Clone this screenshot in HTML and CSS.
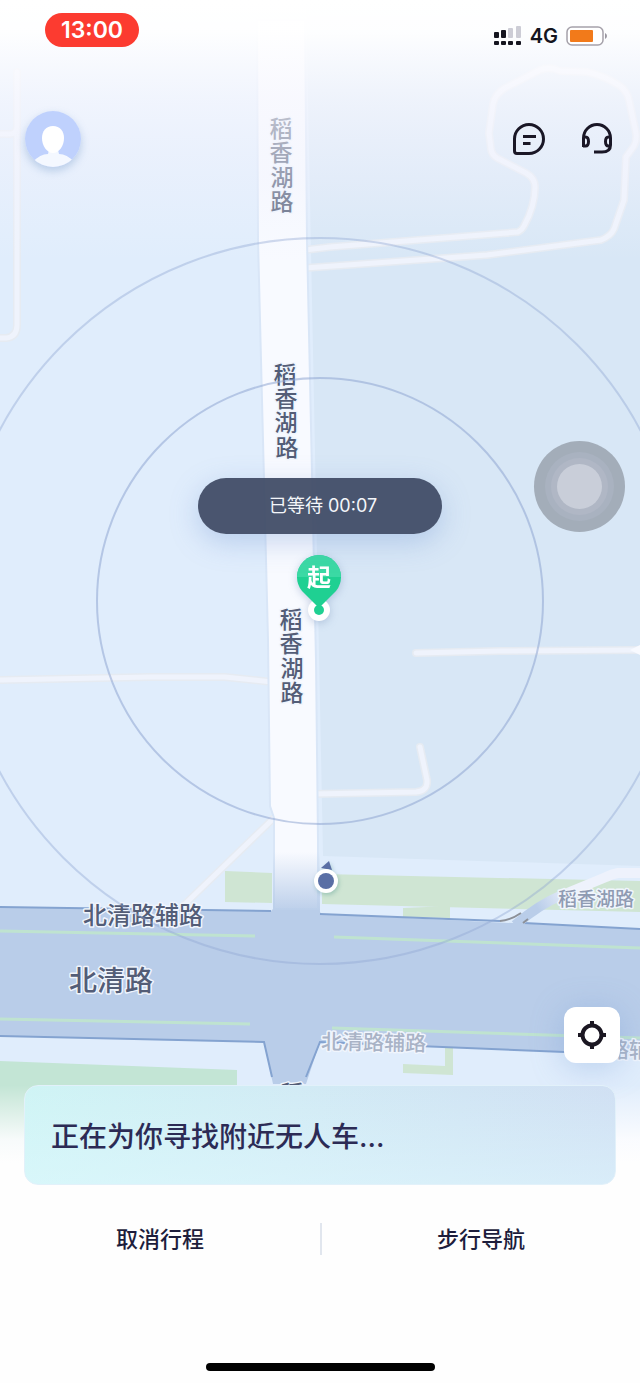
FILE: index.html
```
<!DOCTYPE html>
<html lang="zh-CN">
<head>
<meta charset="utf-8">
<meta name="viewport" content="width=device-width, initial-scale=1">
<title>正在寻找附近无人车</title>
<link rel="stylesheet" href="styles.css">
</head>
<body>
    <main class="screen">
        <div class="map">
            <svg class="map-canvas" viewBox="0 0 640 1163" preserveAspectRatio="xMidYMin slice">
                <defs>
                    <linearGradient id="fade-top" x1="0" y1="0" x2="0" y2="1">
                        <stop offset="0" stop-color="#fff"/>
                        <stop offset="0.12" stop-color="#fff" stop-opacity="0.96"/>
                        <stop offset="0.38" stop-color="#f8f8fe" stop-opacity="0.7"/>
                        <stop offset="0.7" stop-color="#f2f3fd" stop-opacity="0.4"/>
                        <stop offset="1" stop-color="#f0f4fd" stop-opacity="0"/>
                    </linearGradient>
                    <linearGradient id="fade-bottom" x1="0" y1="0" x2="0" y2="1">
                        <stop offset="0" stop-color="#fdfdff" stop-opacity="0"/>
                        <stop offset="0.7" stop-color="#fdfdff" stop-opacity="0.9"/>
                        <stop offset="1" stop-color="#fefefe"/>
                    </linearGradient>
                    <linearGradient id="road-end" x1="0" y1="0" x2="0" y2="1">
                        <stop offset="0" stop-color="#b9cde9" stop-opacity="0"/>
                        <stop offset="1" stop-color="#b9cde9"/>
                    </linearGradient>
                    <linearGradient id="ramp" gradientUnits="userSpaceOnUse" x1="518" y1="925" x2="572" y2="892">
                        <stop offset="0" stop-color="#b9cde9"/>
                        <stop offset="0.4" stop-color="#b9cde9"/>
                        <stop offset="1" stop-color="#eef2fc"/>
                    </linearGradient>
                </defs>

                <!-- 地块 -->
                <rect width="640" height="1163" fill="#e0edfc"/>
                <path d="M306 0H640V866L323 856Z" fill="#d8e7f6"/>
                <g fill="#cfe5d3">
                    <path d="M225 871L272 873V903L225 902Z"/>
                    <path d="M322 874L640 881V912L322 904Z"/>
                    <path d="M403 908L450 906V918L403 917Z"/>
                    <path d="M445 1048H453V1075L403 1073V1064L445 1066Z"/>
                </g>
                <path d="M0 1061L237 1070V1163H0Z" fill="#c3e5d5"/>

                <!-- 小路 -->
                <g class="lane-edge">
                    <path id="lane1" d="M0 134H10Q17 134 17 126V72M17 120V325Q17 337 6 338H0"/>
                    <path id="lane2" d="M305 250L330 247L518 232Q522 230 524 226Q535 206 535 187Q535 178 526 173L497 158Q492 155 491 149L489 133L493 104Q495 94 505 88L540 70Q550 66 560 71L587 72Q605 76 620 86Q627 91 629 100L636 133Q637 141 634 146L626 157L624 200L614 229Q611 236 601 240L487 255L305 268"/>
                    <path id="lane3" d="M0 680L150 677H225L272 682"/>
                    <path id="lane4" d="M416 653L500 651L640 650"/>
                    <path id="lane5" d="M312 794L416 792Q428 791 427 780L420 747"/>
                    <path id="lane6" d="M276 816L184 905"/>
                </g>
                <g class="lane">
                    <use href="#lane1"/>
                    <use href="#lane2"/>
                    <use href="#lane3"/>
                    <use href="#lane4"/>
                    <use href="#lane5"/>
                    <use href="#lane6"/>
                </g>
                <path d="M630 650L640 645V655Z" fill="#f8faff"/>

                <!-- 北清路 -->
                <path d="M0 907L271 911L275 907L318 907L321 914L640 929V1055L320 1042L306 1084H273L264 1042L0 1036Z" fill="#b9cde9"/>
                <g class="road-edge">
                    <path d="M0 907L271 911M320 914L500 921M524 923L640 929"/>
                    <path d="M0 1036L264 1042L272 1077M306 1077L320 1042L640 1055"/>
                </g>
                <g class="median">
                    <path d="M0 931L255 936M334 937L640 948"/>
                    <path d="M0 1019L250 1024M332 1028L640 1038"/>
                </g>
                <path d="M640 873H618Q612 874 606 877L560 896Q540 904 515 925" fill="none" stroke="url(#ramp)" stroke-width="10"/>
                <path d="M500 921Q511 920 521 913M523 923L528 919" fill="none" stroke="#8c9098" stroke-width="2"/>

                <!-- 稻香湖路 -->
                <path d="M257 20L258 240L268 640L270 806L274 818V909H318V840L316 660L307 240L305 20Z" fill="#f8faff" stroke="#d9e6f7" stroke-width="2"/>
                <rect x="273" y="852" width="47" height="62" fill="url(#road-end)"/>

                <g class="label">
                    <text class="vertical"><tspan x="281" y="137">稻</tspan><tspan x="281" y="161">香</tspan><tspan x="282" y="186">湖</tspan><tspan x="282" y="210">路</tspan></text>
                    <text class="vertical"><tspan x="285" y="383">稻</tspan><tspan x="286" y="407">香</tspan><tspan x="286" y="431">湖</tspan><tspan x="287" y="456">路</tspan></text>
                    <text class="vertical"><tspan x="291" y="628">稻</tspan><tspan x="291" y="652">香</tspan><tspan x="292" y="677">湖</tspan><tspan x="292" y="701">路</tspan></text>
                    <text class="vertical" x="292" y="1102">稻</text>
                    <text class="side" x="83" y="924">北清路辅路</text>
                    <text class="main" x="69" y="991">北清路</text>
                    <text class="minor" x="558" y="906">稻香湖路</text>
                    <text class="faint" x="321" y="1049" transform="rotate(1 321 1049)">北清路辅路</text>
                    <text class="faint" x="566" y="1057">北清路辅路</text>
                </g>

                <rect width="640" height="260" fill="url(#fade-top)"/>
                <rect y="1085" width="640" height="78" fill="url(#fade-bottom)"/>

                <!-- 搜索波纹 -->
                <circle cx="320" cy="601" r="223" fill="none" stroke="#8fa5d2" stroke-opacity="0.55" stroke-width="2"/>
                <circle cx="320" cy="601" r="363" fill="none" stroke="#8fa5d2" stroke-opacity="0.4" stroke-width="2"/>

                <!-- 起点 -->
                <g class="pin">
                    <circle cx="319" cy="610" r="11" fill="#fff"/>
                    <path d="M319 608L302 591A22 22 0 1 1 336 591Z" fill="#1fd092"/>
                    <path d="M297 577A22 22 0 0 1 341 577Z" fill="#3bd9a4"/>
                    <circle cx="319" cy="610" r="5" fill="#1fd092"/>
                    <text class="pin-text" x="319" y="586">起</text>
                </g>

                <!-- 当前位置 -->
                <g class="me">
                    <path d="M321 868L329 861L332 870Z" fill="#5a6fa5"/>
                    <circle cx="326" cy="881" r="12" fill="#fff"/>
                    <circle cx="326" cy="881" r="8" fill="#5a6fa5"/>
                </g>
            </svg>
            <div class="wait-pill">已等待 00:07</div>
            <button class="assist" type="button" aria-label="辅助触控"><span class="assist-dot"></span></button>
        </div>

        <header class="status-bar">
            <span class="clock">13:00</span>
            <div class="status-right">
                <svg width="28" height="20" viewBox="0 0 28 20">
                    <g fill="#15151f">
                        <rect x="0" y="6" width="5" height="6" rx="1"/>
                        <rect x="7" y="4" width="5" height="8" rx="1"/>
                        <rect x="0" y="15" width="5" height="4" rx="1"/>
                        <rect x="7" y="15" width="5" height="4" rx="1"/>
                        <rect x="14" y="15" width="5" height="4" rx="1"/>
                        <rect x="22" y="15" width="5" height="4" rx="1"/>
                    </g>
                    <g fill="#cdcdd6">
                        <rect x="14" y="2" width="5" height="10" rx="1"/>
                        <rect x="22" y="0" width="5" height="12" rx="1"/>
                    </g>
                </svg>
                <span class="network">4G</span>
                <svg width="42" height="20" viewBox="0 0 42 20">
                    <rect x="1" y="1" width="36" height="18" rx="5" fill="#fff" stroke="#a5a1aa" stroke-width="1.5"/>
                    <rect x="4" y="4" width="23" height="12" rx="1" fill="#f27a1a"/>
                    <path d="M39 7Q41 8 41 10T39 13Z" fill="#9a97a0"/>
                </svg>
            </div>
        </header>

        <nav class="top-bar">
            <button class="avatar" type="button" aria-label="个人中心">
                <svg width="56" height="56" viewBox="0 0 56 56">
                    <defs><clipPath id="round"><circle cx="28" cy="28" r="28"/></clipPath></defs>
                    <g clip-path="url(#round)">
                        <rect width="56" height="56" fill="#bfd1fd"/>
                        <path d="M8 51Q15 43 23 43L24 39H33L34 43Q42 43 49 51L46 56H11Z" fill="#f4f8ff"/>
                        <path d="M28 15C35 15 39 20 39 27C39 35 34 42 28 42S17 35 17 27C17 20 21 15 28 15Z" fill="#fff"/>
                    </g>
                </svg>
            </button>
            <div class="top-actions">
                <button class="icon-button" type="button" aria-label="消息">
                    <svg width="34" height="34" viewBox="0 0 34 34" fill="none" stroke="#1a1726" stroke-width="3">
                        <path d="M17 2.500A14.500 14.500 0 0 1 17 31.500H5Q2.500 31.500 2.500 29V17A14.500 14.500 0 0 1 17 2.500Z"/>
                        <path d="M11 14.500H24M11 21.500H18.500"/>
                    </svg>
                </button>
                <button class="icon-button" type="button" aria-label="客服">
                    <svg width="34" height="34" viewBox="0 0 34 34" fill="none" stroke="#1a1726" stroke-width="3">
                        <path d="M3.500 25V16A13.500 13.500 0 0 1 30.500 16V23Q30.500 30 22 30H14"/>
                        <path d="M4 15H5.500Q8.500 15 8.500 19.500T5.500 24H3"/>
                        <path d="M30 15H28.500Q25.500 15 25.500 19.500T28.500 24H30"/>
                    </svg>
                </button>
            </div>
        </nav>

        <button class="locate" type="button" aria-label="定位">
            <svg width="30" height="30" viewBox="0 0 30 30" fill="none" stroke="#1b1722" stroke-width="4">
                <circle cx="15" cy="15" r="9.500"/>
                <path d="M15 1V6M15 24V29M1 15H6M24 15H29"/>
            </svg>
        </button>

        <section class="panel">
            <h1 class="notice">正在为你寻找附近无人车...</h1>
            <div class="actions">
                <button class="action" type="button">取消行程</button>
                <button class="action" type="button">步行导航</button>
            </div>
            <div class="home-bar"></div>
        </section>
    </main>
</body>
</html>
```

FILE: styles.css
```
* {
    box-sizing: border-box;
}
body {
    margin: 0;
    background: #fefefe;
    font-family: Inter, "Noto Sans CJK SC", sans-serif;
    color: #1d1d3c;
}
button {
    padding: 0;
    border: 0;
    background: none;
    font: inherit;
    color: inherit;
    cursor: pointer;
}
svg {
    display: block;
}
.screen {
    position: relative;
    display: flex;
    flex-direction: column;
    min-height: 100vh;
}

/* 地图 */
.map {
    position: absolute;
    top: 0;
    left: 0;
    right: 0;
    bottom: 220px;
    overflow: hidden;
}
.map-canvas {
    width: 100%;
    height: 100%;
}
.lane,
.lane-edge {
    fill: none;
    stroke-linejoin: round;
    stroke-linecap: round;
}
.lane-edge {
    stroke: #e6ebf2;
    stroke-width: 8px;
}
.lane {
    stroke: #eff3fc;
    stroke-width: 5px;
}
.road-edge {
    fill: none;
    stroke: #84a3d0;
    stroke-width: 2px;
}
.median {
    fill: none;
    stroke: #bfe3d0;
    stroke-width: 3px;
}
.label {
    font-family: "Noto Sans CJK SC", sans-serif;
    font-weight: 500;
    fill: #535d77;
    stroke: #f0f5fd;
    stroke-width: 3px;
    stroke-linejoin: round;
    paint-order: stroke;
}
.vertical {
    font-size: 23px;
    text-anchor: middle;
}
.side {
    font-size: 24px;
}
.main {
    font-size: 28px;
}
.minor {
    font-size: 19px;
    fill: #8f9bb2;
}
.faint {
    font-size: 21px;
    fill: #a9b3c6;
}
.pin {
    filter: drop-shadow(0 2px 4px rgba(80, 110, 160, 0.3));
}
.pin-text {
    font-family: "Noto Sans CJK SC", sans-serif;
    font-size: 24px;
    font-weight: 700;
    text-anchor: middle;
    fill: #fff;
}
.me {
    filter: drop-shadow(1px 2px 2px rgba(80, 150, 140, 0.4));
}
.wait-pill {
    position: absolute;
    top: 478px;
    left: 50%;
    width: 244px;
    padding-left: 6px;
    transform: translateX(-50%);
    border-radius: 28px;
    background: rgba(65, 77, 103, 0.95);
    box-shadow: 0 8px 28px rgba(110, 145, 210, 0.35);
    color: #f4f6fa;
    font-size: 18px;
    line-height: 56px;
    text-align: center;
}
.assist {
    position: absolute;
    top: 441px;
    right: 15px;
    display: flex;
    align-items: center;
    justify-content: center;
    width: 91px;
    height: 91px;
    border-radius: 50%;
    background: #a3adb9;
}
.assist-dot {
    width: 45px;
    height: 45px;
    border-radius: 50%;
    background: #c9ced9;
    box-shadow: 0 0 0 6px #b0b7c5, 0 0 0 12px #a9b2c0;
}

/* 顶部 */
.status-bar,
.top-bar {
    position: relative;
    display: flex;
    align-items: center;
    justify-content: space-between;
}
.status-bar {
    height: 72px;
    padding: 0 32px 0 45px;
}
.clock {
    width: 94px;
    margin-bottom: 12px;
    border-radius: 17px;
    background: #fc3b30;
    color: #fff;
    font-size: 23px;
    font-weight: 600;
    line-height: 34px;
    text-align: center;
}
.status-right {
    display: flex;
    align-items: center;
    gap: 8px;
}
.network {
    color: #15151f;
    font-size: 20px;
    font-weight: 600;
    line-height: 24px;
}
.top-bar {
    margin-top: 39px;
    padding: 0 26px 0 25px;
}
.avatar {
    border-radius: 50%;
    box-shadow: 0 4px 8px rgba(110, 150, 200, 0.4);
}
.top-actions {
    display: flex;
    gap: 34px;
}

/* 定位 */
.locate {
    position: relative;
    display: flex;
    align-items: center;
    justify-content: center;
    width: 56px;
    height: 56px;
    margin: auto 20px 22px auto;
    border-radius: 12px;
    background: #fff;
    box-shadow: 0 4px 32px rgba(110, 150, 210, 0.35);
}

/* 底部面板 */
.panel {
    position: relative;
}
.notice {
    margin: 0 24px;
    padding: 32px 26px 28px;
    border: 1px solid #e2f1fa;
    border-radius: 14px;
    background:
        linear-gradient(to top, rgba(225, 250, 255, 0.5), rgba(225, 250, 255, 0)),
        linear-gradient(100deg, #cff4f5 0%, #d2ebf5 45%, #d0dff3 100%);
    color: #2c2b55;
    font-size: 28px;
    font-weight: 500;
    line-height: 38px;
}
.actions {
    display: grid;
    grid-template-columns: 1fr 1fr;
    padding: 38px 0 40px;
}
.action {
    font-size: 22px;
    font-weight: 500;
    line-height: 32px;
}
.action + .action {
    border-left: 2px solid #e1e6ee;
}
.home-bar {
    width: 229px;
    height: 8px;
    margin: 68px auto 12px;
    border-radius: 4px;
    background: #000;
}
```
